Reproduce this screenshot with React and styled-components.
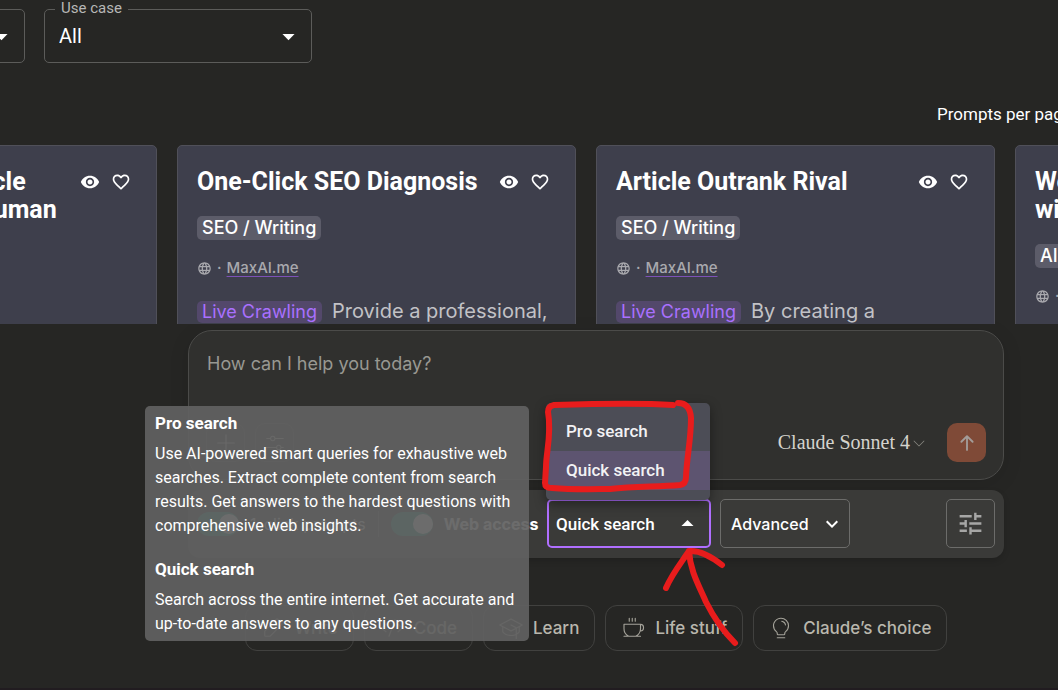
import React from 'react';
import styled, { createGlobalStyle, css } from 'styled-components';
import {
  MdVisibility,
  MdFavoriteBorder,
  MdLanguage,
  MdTune,
  MdArrowDropDown,
  MdArrowDropUp,
  MdKeyboardArrowDown,
} from 'react-icons/md';
import {
  PiCoffeeLight,
  PiLightbulbLight,
  PiGraduationCapLight,
  PiPencilSimpleLight,
  PiCodeLight,
  PiCaretDownLight,
  PiArrowUpBold,
  PiPlusLight,
  PiSlidersHorizontalLight,
} from 'react-icons/pi';

const roboto = `Roboto, 'Liberation Sans', sans-serif`;
const body = `Inter, 'Liberation Sans', sans-serif`;

const GlobalStyle = createGlobalStyle`
  *, *::before, *::after { box-sizing: border-box; }
  body {
    margin: 0;
    background: #262624;
    color: #fff;
    font-family: ${roboto};
    overflow: hidden;
  }
  h2, h3, p { margin: 0; }
  button, select, textarea { font: inherit; color: inherit; }
`;

const Page = styled.main`
  position: relative;
  min-height: 100vh;
  overflow: hidden;
  border-bottom: 2px solid #211c20;
`;

const Filters = styled.div`
  display: flex;
  gap: 19px;
  margin: 9px 0 0 -243px;
`;

const Field = styled.div`
  position: relative;
  flex: 0 0 268px;
  height: 54px;
`;

const FieldLabel = styled.label`
  position: absolute;
  top: -11px;
  left: 11px;
  padding: 0 6px;
  background: #262624;
  color: #b7b7b6;
  font-size: 15px;
  line-height: 20px;
`;

const FieldSelect = styled.select`
  appearance: none;
  width: 100%;
  height: 100%;
  padding: 0 14px;
  border: 1px solid #5c5c5a;
  border-radius: 5px;
  background: transparent;
  font-size: 20px;
`;

const FieldArrow = styled(MdArrowDropDown)`
  position: absolute;
  top: 13px;
  right: 9px;
  width: 29px;
  height: 29px;
  pointer-events: none;
`;

const PerPage = styled.p`
  margin: 39px 0 0 auto;
  width: 121px;
  white-space: nowrap;
  font-size: 17px;
  line-height: 24px;
`;

const Strip = styled.section`
  display: flex;
  align-items: stretch;
  gap: 20px;
  height: 179px;
  margin: 19px 0 0 -242px;
  overflow: hidden;
`;

const Card = styled.article`
  flex: 0 0 399px;
  min-width: 0;
  height: 300px;
  padding: 20px 20px 20px 19px;
  border: 1px solid #505059;
  border-radius: 5px;
  background: #3e3f4c;
`;

const CardHead = styled.header`
  display: flex;
  align-items: flex-start;
  justify-content: space-between;
`;

const CardTitle = styled.h2`
  padding-top: 2px;
  font-size: 25px;
  line-height: 28px;
  font-weight: 700;
  white-space: pre;
`;

const CardActions = styled.div`
  display: flex;
  gap: 1px;
`;

const IconButton = styled.button`
  display: grid;
  place-items: center;
  width: 30px;
  height: 30px;
  padding: 1px 0 0;
  border: 0;
  background: none;
  font-size: 20px;
`;

const Tag = styled.span`
  display: inline-block;
  padding: 0 5px;
  border-radius: 5px;
  font-family: ${body};
  font-size: 18px;
  font-weight: 500;
  line-height: 24px;
  background: #5c5c69;
  ${(p) =>
    p.$live &&
    css`
      font-weight: 400;
      line-height: 22px;
      background: #53486b;
      color: #a970ff;
      margin-right: 10px;
    `}
`;

const TagRow = styled.div`
  display: flex;
  margin-top: 20px;
`;

const Source = styled.div`
  display: flex;
  align-items: center;
  gap: 5px;
  margin-top: 18px;
  color: #a9a9ae;
  font-family: ${body};
  font-size: 15px;
  font-weight: 500;
  line-height: 20px;
`;

const SourceLink = styled.a`
  color: inherit;
  text-decoration-color: #7d52b8;
  text-underline-offset: 3px;
`;

const Blurb = styled.p`
  margin-top: 18px;
  color: #c2c2c6;
  font-family: ${body};
  font-size: 20px;
  line-height: 30px;
  white-space: nowrap;
`;

const Dock = styled.div`
  margin: 6px 54px 0 188px;
`;

const Composer = styled.form`
  display: flex;
  flex-direction: column;
  justify-content: space-between;
  height: 150px;
  padding: 17px;
  border: 1px solid #4b4b49;
  border-radius: 24px;
  background: #30302e;
  box-shadow: 0 4px 20px rgba(0, 0, 0, 0.1);
`;

const Prompt = styled.textarea`
  height: 32px;
  padding: 0 1px;
  border: 0;
  outline: 0;
  resize: none;
  overflow: hidden;
  background: none;
  font-family: ${body};
  font-size: 18px;
  line-height: 32px;
  &::placeholder {
    color: #989892;
    opacity: 1;
  }
`;

const ComposerBar = styled.div`
  display: flex;
  align-items: center;
  gap: 10px;
`;

const SquareButton = styled.button`
  display: grid;
  place-items: center;
  width: 39px;
  height: 39px;
  padding: 0;
  border: 1px solid #4b4b49;
  border-radius: 10px;
  background: none;
  color: #c2c0b6;
  font-size: 24px;
`;

const SendButton = styled(SquareButton)`
  margin-left: 10px;
  border: 0;
  background: #7f4a37;
  color: #a39c98;
  font-size: 20px;
`;

const ModelButton = styled.button`
  display: flex;
  align-items: center;
  gap: 1px;
  margin-left: auto;
  padding: 0;
  border: 0;
  background: none;
  color: #d4d3cd;
  font-family: 'Liberation Serif', serif;
  font-size: 20px;
  svg {
    font-size: 16px;
    color: #8a8983;
  }
`;

const Toolbar = styled.div`
  display: flex;
  align-items: center;
  height: 68px;
  margin-top: 10px;
  padding: 0 9px 1px;
  border-radius: 12px;
  background: #3a3a38;
  box-shadow: 0 3px 6px rgba(0, 0, 0, 0.15);
`;

const Toggle = styled.label`
  display: flex;
  align-items: center;
  gap: 11px;
  white-space: nowrap;
  font-family: ${body};
  font-size: 16px;
  font-weight: ${(p) => (p.$strong ? 700 : 400)};
`;

const Switch = styled.input`
  appearance: none;
  display: flex;
  justify-content: flex-end;
  width: 42px;
  height: 24px;
  margin: 0;
  padding: 2px 0;
  border-radius: 12px;
  background: #1f9d86;
  &::before {
    content: '';
    width: 20px;
    height: 20px;
    border-radius: 50%;
    background: #fff;
  }
`;

const Divider = styled.span`
  width: 1px;
  height: 26px;
  margin: 0 12px;
  background: #6a6a68;
`;

const ModeField = styled.div`
  position: relative;
  flex: none;
  width: 164px;
  height: 49px;
  margin-left: auto;
`;

const ModeSelect = styled.select`
  appearance: none;
  width: 100%;
  height: 100%;
  padding: 0 7px;
  border: 2px solid #b06fff;
  border-radius: 5px;
  background: transparent;
  font-size: 17px;
  font-weight: 500;
`;

const ModeArrow = styled(MdArrowDropUp)`
  position: absolute;
  top: 10px;
  right: 9px;
  width: 29px;
  height: 29px;
  pointer-events: none;
`;

const Menu = styled.ul`
  position: absolute;
  z-index: 1;
  left: -1px;
  bottom: 48px;
  width: 164px;
  margin: 0;
  padding: 9px 0 10px;
  border-radius: 5px;
  list-style: none;
  background: #4c4d56;
  box-shadow: 0 4px 12px rgba(0, 0, 0, 0.4);
`;

const MenuItem = styled.li`
  padding: 0 20px;
  color: #f2f2f4;
  font-size: 17px;
  font-weight: 500;
  line-height: 39px;
  background: ${(p) => (p.$selected ? '#5d5470' : 'transparent')};
`;

const OutlineButton = styled.button`
  display: flex;
  flex: none;
  align-items: center;
  justify-content: space-between;
  width: 130px;
  height: 49px;
  margin-left: 9px;
  padding: 0 5px 0 10px;
  border: 1px solid #6c6c6a;
  border-radius: 5px;
  background: none;
  font-family: ${body};
  font-size: 16px;
  font-weight: 500;
  svg {
    font-size: 24px;
  }
`;

const TuneButton = styled(OutlineButton)`
  justify-content: center;
  width: 49px;
  margin-left: 96px;
  padding: 0;
  color: #a6a6a5;
  svg {
    font-size: 29px;
  }
`;

const Chips = styled.div`
  display: flex;
  justify-content: center;
  gap: 10px;
  margin-top: 47px;
`;

const Chip = styled.button`
  display: flex;
  flex: none;
  align-items: center;
  gap: 10px;
  height: 46px;
  padding: 0 15px;
  border: 1px solid #41413f;
  border-radius: 12px;
  background: none;
  color: #b9b7ad;
  font-family: ${body};
  font-size: 17px;
  font-weight: 500;
  svg {
    font-size: 24px;
    color: #a5a39a;
  }
`;

const Tooltip = styled.aside`
  position: absolute;
  z-index: 2;
  left: 145px;
  top: 406px;
  width: 384px;
  padding: 5px 10px;
  border-radius: 5px;
  background: rgba(97, 97, 97, 0.93);
  font-size: 16px;
  line-height: 24px;
`;

const TipTitle = styled.h3`
  font-size: 17px;
  line-height: 24px;
  font-weight: 700;
`;

const TipText = styled.p`
  margin: 7px 0 19px;
  &:last-child {
    margin-bottom: 0;
  }
`;

const Markup = styled.svg`
  position: absolute;
  z-index: 3;
  left: 540px;
  top: 396px;
  pointer-events: none;
`;

const cards = [
  { title: 'Transform Any Article\nand Sound Like a Human', tag: 'Writing', text: '' },
  { title: 'One-Click SEO Diagnosis', tag: 'SEO / Writing', text: 'Provide a professional,' },
  { title: 'Article Outrank Rival', tag: 'SEO / Writing', text: 'By creating a' },
  { title: 'Website Chat\nwith AI', tag: 'AI / Chat', text: '' },
];

const chips = [
  [PiPencilSimpleLight, 'Write'],
  [PiCodeLight, 'Code'],
  [PiGraduationCapLight, 'Learn'],
  [PiCoffeeLight, 'Life stuff'],
  [PiLightbulbLight, 'Claude’s choice'],
];

function PromptCard({ title, tag, text }) {
  return (
    <Card>
      <CardHead>
        <CardTitle>{title}</CardTitle>
        <CardActions>
          <IconButton aria-label="View"><MdVisibility /></IconButton>
          <IconButton aria-label="Favourite"><MdFavoriteBorder /></IconButton>
        </CardActions>
      </CardHead>
      <TagRow><Tag>{tag}</Tag></TagRow>
      <Source>
        <MdLanguage />
        <span>·</span>
        <SourceLink href="#maxai">MaxAI.me</SourceLink>
      </Source>
      <Blurb><Tag $live>Live Crawling</Tag>{text}</Blurb>
    </Card>
  );
}

export default function App() {
  return (
    <>
      <GlobalStyle />
      <Page>
        <Filters>
          <Field>
            <FieldSelect aria-label="Category"><option>All</option></FieldSelect>
            <FieldArrow />
          </Field>
          <Field>
            <FieldLabel htmlFor="use-case">Use case</FieldLabel>
            <FieldSelect id="use-case"><option>All</option></FieldSelect>
            <FieldArrow />
          </Field>
        </Filters>
        <PerPage>Prompts per page</PerPage>
        <Strip>
          {cards.map((card) => <PromptCard key={card.title} {...card} />)}
        </Strip>
        <Dock>
          <Composer onSubmit={(e) => e.preventDefault()}>
            <Prompt aria-label="Message" placeholder="How can I help you today?" />
            <ComposerBar>
              <SquareButton type="button" aria-label="Add"><PiPlusLight /></SquareButton>
              <SquareButton type="button" aria-label="Tools"><PiSlidersHorizontalLight /></SquareButton>
              <ModelButton type="button">Claude Sonnet 4<PiCaretDownLight /></ModelButton>
              <SendButton aria-label="Send"><PiArrowUpBold /></SendButton>
            </ComposerBar>
          </Composer>
          <Toolbar>
            <Toggle><Switch type="checkbox" defaultChecked />1-click prompts</Toggle>
            <Divider />
            <Toggle $strong><Switch type="checkbox" defaultChecked />Web access</Toggle>
            <ModeField>
              <ModeSelect aria-label="Search mode" defaultValue="quick">
                <option value="pro">Pro search</option>
                <option value="quick">Quick search</option>
              </ModeSelect>
              <ModeArrow />
              <Menu>
                <MenuItem>Pro search</MenuItem>
                <MenuItem $selected>Quick search</MenuItem>
              </Menu>
            </ModeField>
            <OutlineButton>Advanced<MdKeyboardArrowDown /></OutlineButton>
            <TuneButton aria-label="Settings"><MdTune /></TuneButton>
          </Toolbar>
          <Chips>
            {chips.map(([Icon, label]) => <Chip key={label}><Icon />{label}</Chip>)}
          </Chips>
        </Dock>
        <Tooltip role="tooltip">
          <TipTitle>Pro search</TipTitle>
          <TipText>
            Use AI-powered smart queries for exhaustive web searches. Extract complete content from
            search results. Get answers to the hardest questions with comprehensive web insights.
          </TipText>
          <TipTitle>Quick search</TipTitle>
          <TipText>
            Search across the entire internet. Get accurate and up-to-date answers to any questions.
          </TipText>
        </Tooltip>
        <Markup width="204" height="256" viewBox="540 396 204 256" fill="none" stroke="#e81c1c" strokeWidth="6" strokeLinecap="round" strokeLinejoin="round" aria-hidden="true">
          <path d="M673 405C640 403 590 404 554 405Q548 406 548 412C552 434 546 452 546 467L545 483Q545 488 552 488C575 490 600 489 610 489C635 486 655 487 680 485Q686 484 686 477C687 455 691 440 691 418Q690 403 678 403" />
          <path d="M735 643C722 630 714 618 706 602C698 584 690 570 689 551M666 588C672 574 681 563 689 551C701 550 712 557 722 565" />
        </Markup>
      </Page>
    </>
  );
}
